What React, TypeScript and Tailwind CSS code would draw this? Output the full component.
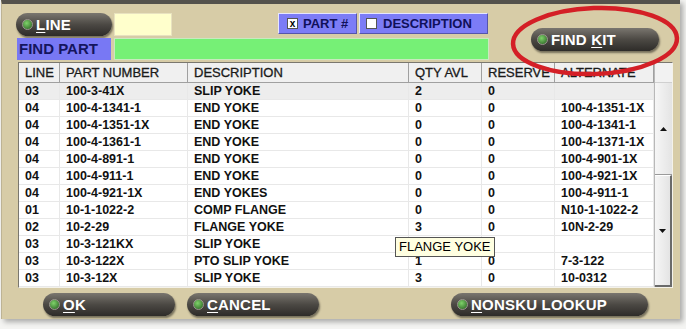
import React from 'react';

const rows = [
    { line: '03', part: '100-3-41X', desc: 'SLIP YOKE', qty: '2', res: '0', alt: '' },
    { line: '04', part: '100-4-1341-1', desc: 'END YOKE', qty: '0', res: '0', alt: '100-4-1351-1X' },
    { line: '04', part: '100-4-1351-1X', desc: 'END YOKE', qty: '0', res: '0', alt: '100-4-1341-1' },
    { line: '04', part: '100-4-1361-1', desc: 'END YOKE', qty: '0', res: '0', alt: '100-4-1371-1X' },
    { line: '04', part: '100-4-891-1', desc: 'END YOKE', qty: '0', res: '0', alt: '100-4-901-1X' },
    { line: '04', part: '100-4-911-1', desc: 'END YOKE', qty: '0', res: '0', alt: '100-4-921-1X' },
    { line: '04', part: '100-4-921-1X', desc: 'END YOKES', qty: '0', res: '0', alt: '100-4-911-1' },
    { line: '01', part: '10-1-1022-2', desc: 'COMP FLANGE', qty: '0', res: '0', alt: 'N10-1-1022-2' },
    { line: '02', part: '10-2-29', desc: 'FLANGE YOKE', qty: '3', res: '0', alt: '10N-2-29' },
    { line: '03', part: '10-3-121KX', desc: 'SLIP YOKE', qty: '', res: '0', alt: '' },
    { line: '03', part: '10-3-122X', desc: 'PTO SLIP YOKE', qty: '1', res: '0', alt: '7-3-122' },
    { line: '03', part: '10-3-12X', desc: 'SLIP YOKE', qty: '3', res: '0', alt: '10-0312' },
];

const cols = ['w-[41px]', 'w-[128px]', 'w-[221px]', 'w-[73px]', 'w-[73px]', 'w-[99px]'];
const heads = ['LINE', 'PART NUMBER', 'DESCRIPTION', 'QTY AVL', 'RESERVE', 'ALTERNATE'];

const PillButton: React.FC<{ pre?: string; hot: string; rest: string; w: string; className?: string }> = ({ pre, hot, rest, w, className }) => (
    <div
        className={`${w} h-[23px] rounded-full flex items-center pl-[6px] gap-[3px] bg-gradient-to-b from-[#7a766f] via-[#4c4944] to-[#2e2c29] shadow-[1px_2px_2px_rgba(0,0,0,0.45)] ${className ?? ''}`}
    >
        <span className="w-[11px] h-[11px] rounded-full bg-[radial-gradient(circle_at_40%_35%,#7fd36a,#245a1e)] border border-[#9a968e] shrink-0" />
        <span className="text-white font-bold text-[15px] leading-none tracking-[0.2px] whitespace-pre">
            {pre}
            <span className="underline underline-offset-2">{hot}</span>
            {rest}
        </span>
    </div>
);

export default function App() {
    return (
        <div className="w-[686px] h-[329px] bg-[#f4f4f2] relative overflow-hidden font-['Liberation_Sans',Arial,sans-serif]">
            <div className="w-[679px] h-[319px] ml-[1px] bg-[#d7cca7] border-t-[4px] border-[#54524c] border-l border-l-[#bdb394] shadow-[3px_3px_5px_rgba(0,0,0,0.3)] flex flex-col">
                {/* top controls */}
                <div className="flex pl-[14px] pt-[9px]">
                    <div className="flex flex-col gap-[2px] w-[473px]">
                        <div className="flex items-start h-[23px]">
                            <PillButton hot="L" rest="INE" w="w-[96px]" />
                            <div className="w-[58px] h-[23px] ml-[2px] bg-[#ffffcc] border border-[#e8e2c0]" />
                            <div className="ml-[106px] flex h-[21px] gap-[2px]">
                                <div className="w-[79px] bg-[#7c7cf6] border border-[#e6e6ff] border-r-[#5555aa] border-b-[#5555aa] flex items-center pl-[8px] gap-[5px]">
                                    <span className="w-[11px] h-[11px] bg-white border border-[#555] text-[10px] leading-[9px] font-bold text-center text-black">x</span>
                                    <span className="text-[13px] font-bold text-[#10105a]">PART #</span>
                                </div>
                                <div className="w-[129px] bg-[#7c7cf6] border border-[#e6e6ff] border-r-[#5555aa] border-b-[#5555aa] flex items-center pl-[6px] gap-[6px]">
                                    <span className="w-[11px] h-[11px] bg-white border border-[#555]" />
                                    <span className="text-[13px] font-bold text-[#10105a]">DESCRIPTION</span>
                                </div>
                            </div>
                        </div>
                        <div className="flex h-[22px] gap-[3px]">
                            <div className="w-[94px] ml-[1px] bg-[#7878f4] flex items-center pl-[2px] text-[15px] font-bold text-[#15155e]">FIND PART</div>
                            <div className="w-[375px] bg-[#76f076] border border-[#c9e9c0]" />
                        </div>
                    </div>
                    <div className="ml-[42px] mt-[15px]">
                        <PillButton pre="FIND " hot="K" rest="IT" w="w-[128px]" />
                    </div>
                </div>
                {/* table */}
                <div className="ml-[16px] mt-[2px] w-[655px] h-[226px] border border-[#7a776e] border-r-[#f4f2ea] border-b-[#f4f2ea] flex bg-white">
                    <div className="w-[635px] flex flex-col">
                        <div className="flex h-[20px] bg-[#f0f0f0] border-b border-[#a0a0a0]">
                            {heads.map((h, i) => (
                                <div key={h} className={`${cols[i]} border-r border-[#a0a0a0] pl-[6px] text-[13px] text-[#1a1a1a] leading-[19px] whitespace-nowrap overflow-hidden [-webkit-text-stroke:0.3px_#1a1a1a]`}>
                                    {h}
                                </div>
                            ))}
                        </div>
                        {rows.map((r, idx) => (
                            <div key={idx} className={`flex h-[17.1px] border-b border-[#e8e8e8] ${idx === 0 ? 'bg-[#ededed]' : 'bg-white'}`}>
                                {[r.line, r.part, r.desc, r.qty, r.res, r.alt].map((v, i) => (
                                    <div key={i} className={`${cols[i]} border-r border-[#e8e8e8] pl-[6px] text-[12.5px] font-bold text-[#111] leading-[16px] whitespace-nowrap`}>
                                        {v}
                                    </div>
                                ))}
                            </div>
                        ))}
                    </div>
                    <div className="w-[18px] flex flex-col bg-[#f2f2f2] border-l border-[#b8b8b8]">
                        <div className="h-[20px] border-b border-[#d0d0d0]" />
                        <div className="h-[92px] flex items-center justify-center border-b border-[#9a9a9a] bg-gradient-to-r from-[#f6f6f6] to-[#e4e4e4]">
                            <svg width="7" height="4" viewBox="0 0 7 4"><path d="M0 4 L3.5 0 L7 4 Z" fill="#111" /></svg>
                        </div>
                        <div className="flex-1 flex items-center justify-center border-r-2 border-b-2 border-[#6a6a6a] border-t border-t-white bg-gradient-to-r from-[#f6f6f6] to-[#e4e4e4]">
                            <svg width="7" height="4" viewBox="0 0 7 4"><path d="M0 0 L3.5 4 L7 0 Z" fill="#111" /></svg>
                        </div>
                    </div>
                </div>
                {/* bottom buttons */}
                <div className="flex mt-[5px] pl-[41px]">
                    <PillButton hot="O" rest="K" w="w-[132px]" />
                    <PillButton hot="C" rest="ANCEL" w="w-[132px]" className="ml-[12px]" />
                    <PillButton hot="N" rest="ONSKU LOOKUP" w="w-[197px]" className="ml-[132px]" />
                </div>
            </div>

            {/* tooltip */}
            <div className="absolute left-[395px] top-[237px] h-[20px] px-[3px] bg-[#ffffe1] border border-[#555] text-[13px] leading-[18px] text-black">
                FLANGE YOKE
            </div>

            {/* red annotation ellipse */}
            <svg className="absolute left-0 top-0 pointer-events-none" width="686" height="329">
                <ellipse cx="595" cy="41" rx="82" ry="33" fill="none" stroke="#d41f26" strokeWidth="4.5" transform="rotate(-2 595 41)" />
            </svg>
        </div>
    );
}
